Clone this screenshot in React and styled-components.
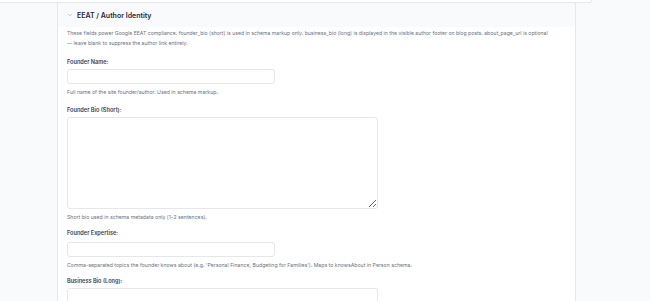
import React from "react";
import styled, { createGlobalStyle } from "styled-components";

const Global = createGlobalStyle`
  html, body { margin: 0; padding: 0; background: #f9fafb; }
  body { font-family: Inter, "Noto Sans", sans-serif; color: #374151; }
  * { box-sizing: border-box; }
`;

const Page = styled.div`
  width: 650px;
  height: 301px;
  overflow: hidden;
  background: #f9fafb;
`;

const TopStrip = styled.div`
  width: 592px;
  height: 3px;
  background: #ffffff;
  border-bottom: 1px solid #e5e7eb;
  border-right: 1px solid #e5e7eb;
  border-bottom-right-radius: 3px;
`;

const Column = styled.div`
  padding-left: 57px;
`;

const Card = styled.section`
  width: 519px;
  background: #ffffff;
  border: 1px solid #e5e7eb;
  border-top: none;
  border-bottom: none;
`;

const Header = styled.div`
  height: 24px;
  display: flex;
  align-items: center;
  gap: 4px;
  padding-left: 9px;
  background: #f9fafb;
`;

const Title = styled.h3`
  margin: 0;
  font-size: 7px;
  font-weight: 600;
  color: #1f2937;
`;

const Body = styled.div`
  padding: 1px 9px 0 9px;
`;

const Description = styled.p`
  margin: 0 0 10px 0;
  font-size: 5.15px;
  line-height: 10px;
  color: #6b7280;
  width: 482px;
`;

const Field = styled.div`
  display: flex;
  flex-direction: column;
  margin-bottom: ${(p) => p.$gap || 7}px;
`;

const Label = styled.label`
  font-size: 5.6px;
  font-weight: 600;
  line-height: 8px;
  color: #374151;
  margin-bottom: ${(p) => p.$gap || 3}px;
`;

const Input = styled.input`
  width: 208px;
  height: 15px;
  border: 1px solid #e5e7eb;
  border-radius: 3px;
  background: #ffffff;
  outline: none;
  padding: 0 4px;
`;

const TextArea = styled.textarea`
  width: 311px;
  height: ${(p) => p.$h}px;
  border: 1px solid #e5e7eb;
  border-radius: 3px;
  background: #ffffff;
  resize: vertical;
  outline: none;
  padding: 4px;
  display: block;
`;

const Help = styled.div`
  margin-top: 4px;
  font-size: 5.2px;
  line-height: 9px;
  color: #6b7280;
`;

const Chevron = () => (
  <svg width="6" height="6" viewBox="0 0 24 24" fill="none" stroke="#9ca3af" strokeWidth="2.5" strokeLinecap="round" strokeLinejoin="round">
    <path d="M6 9l6 6 6-6" />
  </svg>
);

export default function App() {
  return (
    <Page>
      <Global />
      <TopStrip />
      <Column>
        <Card>
          <Header>
            <Chevron />
            <Title>EEAT / Author Identity</Title>
          </Header>
          <Body>
            <Description>
              These fields power Google EEAT compliance. founder_bio (short) is used in schema markup only. business_bio (long) is displayed in the visible author footer on blog posts. about_page_url is optional — leave blank to suppress the author link entirely.
            </Description>
            <Field $gap={9}>
              <Label>Founder Name:</Label>
              <Input type="text" />
              <Help>Full name of the site founder/author. Used in schema markup.</Help>
            </Field>
            <Field>
              <Label>Founder Bio (Short):</Label>
              <TextArea $h={92} />
              <Help>Short bio used in schema metadata only (1–2 sentences).</Help>
            </Field>
            <Field>
              <Label $gap={5}>Founder Expertise:</Label>
              <Input type="text" />
              <Help>Comma-separated topics the founder knows about (e.g. 'Personal Finance, Budgeting for Families'). Maps to knowsAbout in Person schema.</Help>
            </Field>
            <Field>
              <Label>Business Bio (Long):</Label>
              <TextArea $h={92} />
            </Field>
          </Body>
        </Card>
      </Column>
    </Page>
  );
}
